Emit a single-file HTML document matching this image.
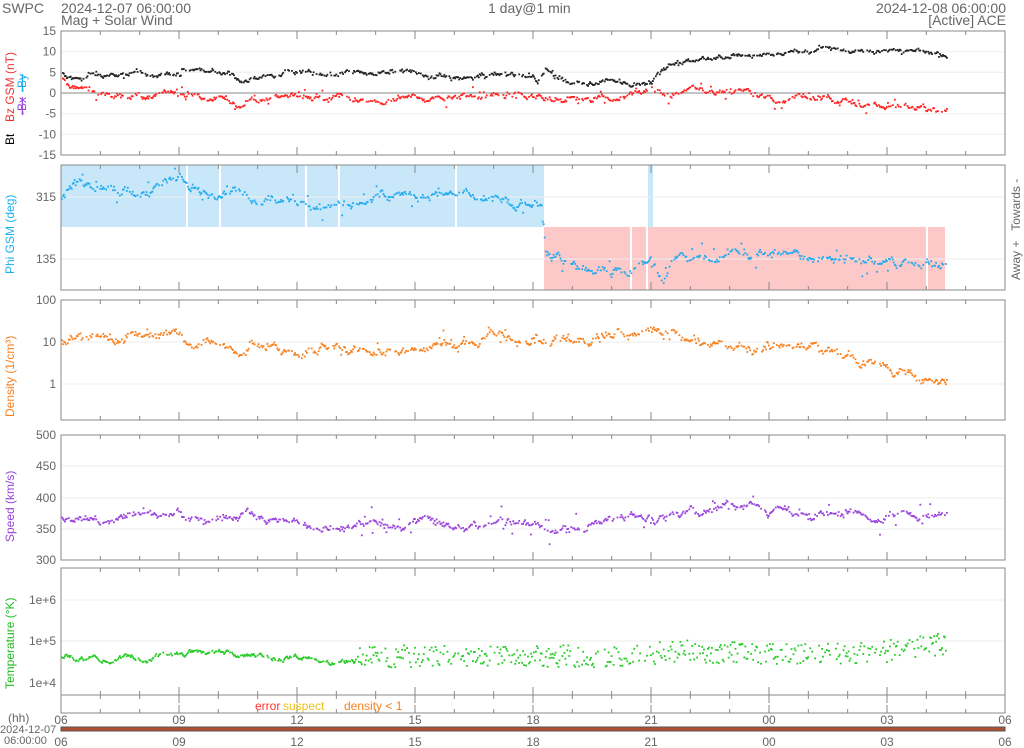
<!DOCTYPE html>
<html><head><meta charset="utf-8"><style>
html,body{margin:0;padding:0;background:#fff;width:1024px;height:748px;overflow:hidden}
svg{display:block;font-family:"Liberation Sans",sans-serif}
</style></head><body>
<svg id="s" width="1024" height="748" xmlns="http://www.w3.org/2000/svg">
<g font-size="14" fill="#666">
<text x="2" y="13">SWPC</text>
<text x="61" y="13">2024-12-07 06:00:00</text>
<text x="61" y="25">Mag + Solar Wind</text>
<text x="488" y="13">1 day@1 min</text>
<text x="1006" y="13" text-anchor="end">2024-12-08 06:00:00</text>
<text x="1006" y="25" text-anchor="end">[Active] ACE</text>
</g>
<g id="bg"></g>
<g id="grid"></g>
<g id="dots"></g>
<g id="axes"></g>
<g font-size="12" fill="#666" id="lab"></g>
<g font-size="12">
<text transform="translate(14,145) rotate(-90)" fill="#000">Bt</text>
<text transform="translate(14,122) rotate(-90)" fill="#e33">Bz GSM (nT)</text>
<text transform="translate(26,92) rotate(-90)" fill="#1ab0f0" text-decoration="line-through">-By</text>
<text transform="translate(26,115) rotate(-90)" fill="#9944dd" text-decoration="line-through">-Bx</text>
<text transform="translate(14,274) rotate(-90)" fill="#1ab0f0">Phi GSM (deg)</text>
<text transform="translate(1020,280) rotate(-90)" fill="#666" font-size="12" xml:space="preserve">Away +   Towards -</text>
<text transform="translate(14,417) rotate(-90)" fill="#f7801e">Density (1/cm³)</text>
<text transform="translate(14,542) rotate(-90)" fill="#9944dd">Speed (km/s)</text>
<text transform="translate(14,689) rotate(-90)" fill="#22bb22">Temperature (°K)</text>
<text x="255" y="710" fill="#f33">error</text>
<text x="283" y="710" fill="#e8c020">suspect</text>
<text x="344" y="710" fill="#f7801e">density &lt; 1</text>
<text x="8" y="722" fill="#666">(hh)</text>
<text x="0" y="733" fill="#666" font-size="11">2024-12-07</text>
<text x="4" y="744" fill="#666" font-size="11">06:00:00</text>
</g>
<rect x="61" y="727" width="944" height="4" fill="#b05030" stroke="#555" stroke-width="1"/>
</svg>
<script>
var NS="http://www.w3.org/2000/svg";
function el(p,t,a){var e=document.createElementNS(NS,t);for(var k in a)e.setAttribute(k,a[k]);document.getElementById(p).appendChild(e);return e;}
var X0=61,X1=1005,PH=(X1-X0)/24;
function X(h){return X0+h*PH;}
var seed=7;function rnd(){seed=(seed*16807)%2147483647;return seed/2147483647;}
function interp(pts,t){for(var i=0;i<pts.length-1;i++){if(t<=pts[i+1][0]){var a=pts[i],b=pts[i+1];var f=(t-a[0])/(b[0]-a[0]);return a[1]+f*(b[1]-a[1]);}}return pts[pts.length-1][1];}
var panels=[[31,155],[165,290],[300,420],[435,560],[568,695]];
el("bg","rect",{x:61,y:165,width:483,height:62,fill:"#c8e8fa"});
el("bg","rect",{x:544,y:227,width:401,height:63,fill:"#fcc8c8"});
el("bg","rect",{x:648,y:165,width:5,height:62,fill:"#c8e8fa"});
[186,219,305,338,455,630].forEach(function(x){el("bg","rect",{x:x,y:165,width:2,height:62,fill:"#fff"});});
[630,646,926].forEach(function(x){el("bg","rect",{x:x,y:227,width:2,height:63,fill:"#fff"});});
function hg(y){el("grid","line",{x1:61,x2:1005,y1:y,y2:y,stroke:"#eee"});}
[51.7,72.3,113.7,134.3].forEach(hg);
[197,259].forEach(hg);[342,384].forEach(hg);[466,498,529].forEach(hg);[600,641].forEach(hg);
el("grid","line",{x1:61,x2:1005,y1:93,y2:93,stroke:"#888"});
panels.concat([[695,713]]).forEach(function(p,i){
 el("axes","rect",{x:61,y:p[0],width:944,height:p[1]-p[0],fill:"none",stroke:"#888"});
 for(var h=0;h<=24;h++){var x=X(h),l=h%3==0?8:4;
  el("axes","line",{x1:x,x2:x,y1:p[0],y2:p[0]+l,stroke:"#888"});
  el("axes","line",{x1:x,x2:x,y1:p[1],y2:p[1]-l,stroke:"#888"});}
});
el("axes","line",{x1:61,x2:1005,y1:727,y2:727,stroke:"#888"});
function lab(x,y,t,a){var e=el("lab","text",{x:x,y:y,"text-anchor":a||"end"});e.textContent=t;}
[["15",31],["10",51.7],["5",72.3],["0",93],["-5",113.7],["-10",134.3],["-15",155]].forEach(function(v){lab(56,v[1]+4,v[0]);});
lab(56,201,"315");lab(56,263,"135");
lab(56,304,"100");lab(56,346,"10");lab(56,388,"1");
[["500",435],["450",466],["400",498],["350",529],["300",560]].forEach(function(v){lab(56,v[1]+4,v[0]);});
lab(56,604,"1e+6");lab(56,645,"1e+5");lab(56,687,"1e+4");
var hh=["06","09","12","15","18","21","00","03","06"];
hh.forEach(function(t,i){var x=X(i*3);lab(x,724,t,"middle");lab(x,746,t,"middle");});
function scatter(pts,fy,col,noise,step,jit){
 var drift=0;
 for(var t=0;t<=22.5;t+=step){if(rnd()<0.25)continue;var v=interp(pts,t);var j=typeof jit=="function"?jit(t):jit;
  drift=drift*0.9+(rnd()-0.5)*noise;
  var y=fy(v)+drift*2+(rnd()-0.5)*noise+(rnd()<0.08?(rnd()-0.5)*j:0);
  el("dots","rect",{x:X(t).toFixed(1),y:y.toFixed(1),width:1.8,height:1.8,fill:col});}}
var bt=[[0,5],[0.3,3.5],[1,4.5],[2,5],[3,4.5],[3.05,6],[4,5.5],[4.5,3.5],[5,4],[5.5,3],[5.7,5.5],[7,5],[9,5],[10,4.5],[11,5],[12,5],[12.1,2.5],[12.3,6],[13,3],[14,3],[14.5,2],[15,3],[15.5,7],[16,8],[17,9.5],[19,10],[21,10.5],[22.5,10.2]];
var bz=[[0,3.5],[0.3,2.5],[1,0],[2,-1],[3,0],[4,-0.5],[4.5,-3],[5,-1],[7,-0.5],[8,-2],[9,-0.5],[12,0],[13,-1],[14,-1],[15,0],[15.5,-1],[16,1],[17,0],[18,-0.5],[19,-1],[20,-2],[21,-3],[22.5,-3.5]];
function fb(v){return 93-v*4.133;}
scatter(bz,fb,"#f22",2,0.025,14);
scatter(bt,fb,"#222",1.5,0.025,6);
var phi=[[0,310],[0.3,360],[1,355],[2,335],[2.5,350],[3,355],[3.5,340],[4,325],[4.5,340],[5,320],[6,305],[6.5,295],[7,310],[8,325],[9,320],[10,320],[11,315],[12,310],[12.2,290],[12.3,150],[13,120],[14,110],[15,140],[15.3,60],[15.5,110],[16,125],[17,140],[18,145],[19,135],[20,130],[21,115],[22,130],[22.5,130]];
scatter(phi,function(v){return 197-(v-315)*0.344;},"#22aaee",3,0.025,30);
var den=[[0,11],[2,15],[3,17],[3.1,10],[4,9],[5,10],[6,7],[7,9],[8,6],[9,7],[10,9],[11,12],[12,15],[12.2,10],[13,12],[15,14],[15.5,18],[16,8],[18,7],[19,6],[20,5],[21,3],[21.5,1.5],[22.5,1.3]];
scatter(den,function(v){return 384-Math.log10(v)*42;},"#f7801e",3,0.025,function(t){return t>7&&t<16?25:8;});
var sp=[[0,365],[3,375],[3.1,362],[5,370],[7,358],[8,355],[10,355],[12,355],[14,360],[15.5,365],[16,380],[17,390],[19,375],[20,378],[21,375],[22.5,373]];
scatter(sp,function(v){return 560-(v-300)*0.625;},"#9944dd",2.5,0.025,function(t){return t>7?30:8;});
var tp=[[0,4e4],[3,4.5e4],[3.2,5e4],[4,5e4],[6,4e4],[7,3e4],[8,4.5e4],[10,4.5e4],[12,4.5e4],[14,4.5e4],[16,6e4],[18,5e4],[20,5e4],[21,6e4],[22.5,9e4]];
var dr=0;
for(var t=0;t<=22.5;t+=0.025){if(rnd()<0.25)continue;var v=interp(tp,t);dr=dr*0.9+(rnd()-0.5)*2;
 var y=641+(5-Math.log10(v))*41.5+(t>7.5?(rnd()-0.5)*22:dr*2);
 el("dots","rect",{x:X(t).toFixed(1),y:y.toFixed(1),width:1.8,height:1.8,fill:"#22cc22"});}
</script>
</body></html>
